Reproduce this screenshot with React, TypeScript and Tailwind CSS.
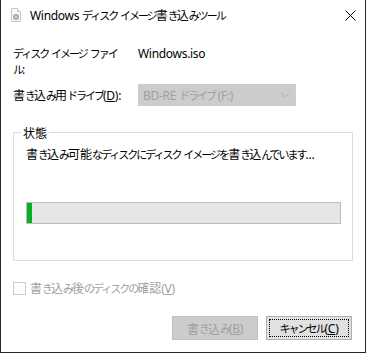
import React from "react";

const HAN = "text-[12px] font-['Noto_Sans_CJK_JP',sans-serif]";
const KANA = "text-[11px] tracking-[-2px] font-['Noto_Sans_CJK_JP',sans-serif]";
const LAT = "text-[12px] tracking-[-0.3px] font-['Noto_Sans','Noto_Sans_CJK_JP',sans-serif]";

function J({ t }: { t: string }) {
  const runs: { k: string; s: string }[] = [];
  for (const ch of t) {
    const k = /[\u3400-\u9fff]/.test(ch) ? "h" : /[\x00-\x7f]/.test(ch) ? "l" : "k";
    if (runs.length && runs[runs.length - 1].k === k) runs[runs.length - 1].s += ch;
    else runs.push({ k, s: ch });
  }
  return (
    <>
      {runs.map((r, i) => (
        <span key={i} className={r.k === "h" ? HAN : r.k === "k" ? KANA : LAT}>
          {r.s}
        </span>
      ))}
    </>
  );
}

export default function App() {
  return (
    <div className="w-[366px] h-[353px] bg-white border-x border-b border-[#262626] flex flex-col text-[12px] leading-[15px] text-black font-['Noto_Sans_CJK_JP',sans-serif]">
      {/* Title bar */}
      <div className="h-[30px] flex items-center pl-[7px] shrink-0">
        <svg width="16" height="16" viewBox="0 0 16 16">
          <path d="M3.5 1.5h6l3 3v10h-9z" fill="#fafafa" stroke="#c8c8c8" />
          <path d="M9.5 1.5v3h3" fill="#eee" stroke="#c8c8c8" />
          <circle cx="8" cy="10" r="3.2" fill="#b8b8b8" />
          <circle cx="8" cy="10" r="2" fill="#8fb98f" />
          <circle cx="8" cy="10" r="0.8" fill="#fff" />
        </svg>
        <span className="ml-[6px] whitespace-nowrap">
          <J t="Windows ディスク イメージ書き込みツール" />
        </span>
        <div className="flex-1" />
        <svg width="11" height="11" viewBox="0 0 11 11" className="mr-[9px]">
          <path d="M0.5 0.5l10 10M10.5 0.5l-10 10" stroke="#000" strokeWidth="1" />
        </svg>
      </div>

      <div className="flex flex-col px-[12px]">
        {/* Row 1 */}
        <div className="flex mt-[15px]">
          <div className="w-[125px] shrink-0 whitespace-nowrap">
            <J t="ディスク イメージ ファイ" />
            <br />
            <J t="ル:" />
          </div>
          <div className="whitespace-nowrap">
            <J t="Windows.iso" />
          </div>
        </div>

        {/* Row 2 */}
        <div className="flex items-center mt-[7px]">
          <div className="w-[125px] shrink-0 whitespace-nowrap">
            <J t="書き込み用ドライブ(" />
            <span className="underline">
              <J t="D" />
            </span>
            <J t="):" />
          </div>
          <div className="w-[158px] h-[22px] bg-[#cccccc] border border-[#cccccc] flex items-center pl-[4px] text-[#a0a0a0]">
            <span className="flex-1 whitespace-nowrap">
              <J t="BD-RE ドライブ (F:)" />
            </span>
            <svg width="10" height="6" viewBox="0 0 10 6" className="mr-[5px]">
              <path d="M0.5 0.5l4.5 4.5 4.5-4.5" stroke="#b4b4b4" fill="none" />
            </svg>
          </div>
        </div>

        {/* Group box */}
        <div className="relative mt-[26px] h-[129px] border border-[#dcdcdc] px-[12px] pt-[13px]">
          <span className="absolute left-[7px] top-[-8px] bg-white px-[2px]">
            <J t="状態" />
          </span>
          <div className="whitespace-nowrap">
            <J t="書き込み可能なディスクにディスク イメージを書き込んでいます..." />
          </div>
          <div className="mt-[40px] h-[22px] w-[315px] border border-[#bcbcbc] bg-[#e6e6e6] flex">
            <div className="w-[5px] h-full bg-[#06b025]" />
          </div>
        </div>

        {/* Checkbox */}
        <div className="flex items-center mt-[19px] text-[#a0a0a0]">
          <div className="w-[13px] h-[13px] border border-[#cccccc] bg-white shrink-0" />
          <span className="ml-[4px] whitespace-nowrap">
            <J t="書き込み後のディスクの確認(" />
            <span className="underline">
              <J t="V" />
            </span>
            <J t=")" />
          </span>
        </div>

        {/* Buttons */}
        <div className="flex justify-end gap-[8px] mt-[20px] pr-[1px]">
          <div className="w-[86px] h-[24px] bg-[#cccccc] border border-[#bfbfbf] flex items-center justify-center text-[#a0a0a0] whitespace-nowrap">
            <J t="書き込み(" />
            <span className="underline">
              <J t="B" />
            </span>
            <J t=")" />
          </div>
          <div className="w-[86px] h-[24px] bg-[#e1e1e1] border border-[#adadad] p-[2px]">
            <div className="w-full h-full border border-dotted border-black flex items-center justify-center whitespace-nowrap">
              <J t="キャンセル(" />
              <span className="underline">
                <J t="C" />
              </span>
              <J t=")" />
            </div>
          </div>
        </div>
      </div>
    </div>
  );
}
